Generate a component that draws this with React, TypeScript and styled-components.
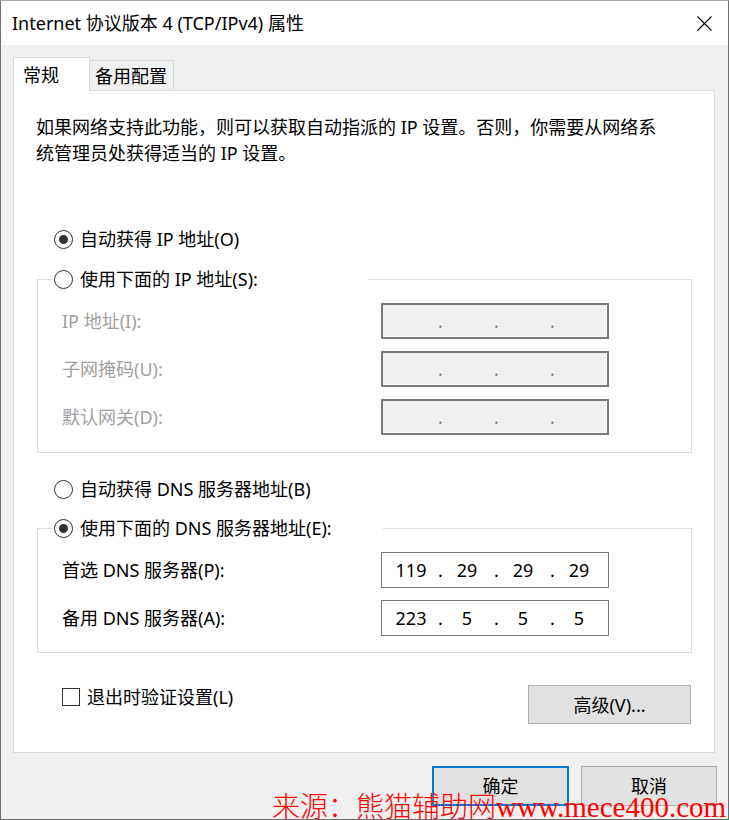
import styled, { createGlobalStyle } from "styled-components";

const GlobalStyle = createGlobalStyle`
  html, body {
    margin: 0;
    padding: 0;
    background: #f0f0f0;
  }
  body {
    font-family: "Noto Sans", "Noto Sans CJK SC", sans-serif;
    font-size: 18px;
    color: #000;
  }
  * {
    box-sizing: border-box;
  }
`;

const Window = styled.div`
  position: relative;
  width: 729px;
  height: 820px;
  border: 1px solid #6f6f6f;
  border-top-color: #a8a8a8;
  background: #f0f0f0;
  overflow: hidden;
  display: flex;
  flex-direction: column;
`;

const TitleBar = styled.div`
  height: 44px;
  flex: none;
  background: #fff;
  display: flex;
  align-items: center;
  justify-content: space-between;
  padding: 0 16px 0 11px;
`;

const Title = styled.span`
  font-size: 18px;
  line-height: 24px;
`;

const Body = styled.div`
  padding: 12px 12px 0 12px;
  display: flex;
  flex-direction: column;
`;

const Tabs = styled.div`
  display: flex;
  align-items: flex-end;
  height: 34px;
  margin-bottom: -1px;
`;

const Tab = styled.div<{ $active?: boolean }>`
  position: relative;
  z-index: ${(p) => (p.$active ? 1 : 0)};
  height: ${(p) => (p.$active ? "34px" : "31px")};
  width: ${(p) => (p.$active ? "77px" : "84px")};
  padding-left: ${(p) => (p.$active ? "9px" : "5px")};
  background: ${(p) => (p.$active ? "#fff" : "#f0f0f0")};
  border: 1px solid #d9d9d9;
  border-left-width: ${(p) => (p.$active ? "1px" : "0")};
  border-bottom-width: ${(p) => (p.$active ? "0" : "1px")};
  display: flex;
  align-items: center;
  line-height: 24px;
`;

const Panel = styled.div`
  width: 702px;
  background: #fff;
  border: 1px solid #d9d9d9;
  padding: 23px 0 28px 22px;
  display: flex;
  flex-direction: column;
`;

const Description = styled.p`
  margin: 0;
  line-height: 26px;
`;

const RadioRow = styled.label<{ $top?: number }>`
  display: flex;
  align-items: center;
  height: 26px;
  margin-top: ${(p) => p.$top ?? 0}px;
  margin-left: 18px;
  line-height: 26px;
`;

const RadioCircle = styled.span<{ $checked?: boolean }>`
  flex: none;
  width: 19px;
  height: 19px;
  border: 1px solid #333;
  border-radius: 50%;
  background: #fff;
  margin-right: 7px;
  display: flex;
  align-items: center;
  justify-content: center;
  &::after {
    content: "";
    display: ${(p) => (p.$checked ? "block" : "none")};
    width: 9px;
    height: 9px;
    border-radius: 50%;
    background: #333;
  }
`;

const Group = styled.fieldset<{ $top: number; $bottom: number }>`
  margin: ${(p) => p.$top}px 0 0 1px;
  width: 655px;
  min-width: 0;
  border: 1px solid #dcdcdc;
  padding: 11px 0 ${(p) => p.$bottom}px 0;
  display: flex;
  flex-direction: column;
  gap: 12px;
`;

const Legend = styled.legend<{ $width: number }>`
  margin-left: 15px;
  padding: 0 0 0 1px;
  width: ${(p) => p.$width}px;
  height: 26px;
  display: flex;
  align-items: center;
  line-height: 26px;
`;

const FieldRow = styled.div`
  display: flex;
  align-items: center;
  padding-left: 24px;
  height: 36px;
`;

const FieldLabel = styled.span<{ $disabled?: boolean }>`
  width: 319px;
  color: ${(p) => (p.$disabled ? "#a0a0a0" : "#000")};
  line-height: 26px;
`;

const IpBox = styled.div<{ $disabled?: boolean }>`
  width: 228px;
  height: 36px;
  border: 1px solid #7a7a7a;
  box-shadow: ${(p) => (p.$disabled ? "inset 0 0 0 1px #7a7a7a, inset -2px -2px 0 0 #fafafa" : "none")};
  background: ${(p) => (p.$disabled ? "#f0f0f0" : "#fff")};
  color: ${(p) => (p.$disabled ? "#8c8080" : "#000")};
  padding-left: 2px;
  display: grid;
  grid-template-columns: 54px 2px 54px 2px 54px 2px 54px;
  align-items: center;
  line-height: 33px;
`;

const Octet = styled.span`
  text-align: center;
`;

const Dot = styled.span`
  justify-self: start;
`;

const BottomRow = styled.div`
  margin-top: 32px;
  display: flex;
  justify-content: space-between;
  align-items: flex-start;
  padding: 0 23px 0 26px;
`;

const CheckRow = styled.label`
  display: flex;
  align-items: center;
  height: 26px;
  margin-top: -1px;
  line-height: 26px;
`;

const CheckBox = styled.span`
  width: 18px;
  height: 18px;
  border: 1px solid #333;
  background: #fff;
  margin-right: 7px;
`;

const Button = styled.button<{ $primary?: boolean; $w: number; $h: number }>`
  width: ${(p) => p.$w}px;
  height: ${(p) => p.$h}px;
  padding: 0;
  background: #e1e1e1;
  border: ${(p) => (p.$primary ? "2px solid #0078d7" : "1px solid #adadad")};
  font-family: "Noto Sans", "Noto Sans CJK SC", sans-serif;
  font-size: 18px;
  color: #000;
  line-height: 24px;
`;

const Footer = styled.div`
  margin: 13px -1px 0 0;
  display: flex;
  justify-content: flex-end;
  gap: 12px;
`;

const Watermark = styled.div`
  position: absolute;
  left: 271px;
  top: 790px;
  color: #ff0000;
  font-size: 28px;
  line-height: 28px;
  white-space: nowrap;
  pointer-events: none;
`;

const WatermarkCjk = styled.span`
  font-family: "Noto Sans CJK SC", sans-serif;
  font-weight: 300;
`;

const WatermarkUrl = styled.span`
  font-family: "Liberation Serif", serif;
  font-size: 29px;
`;

const CloseIcon = () => (
  <svg width="15" height="15" viewBox="0 0 15 15">
    <path d="M0.5 0.5 L14.5 14.5 M14.5 0.5 L0.5 14.5" stroke="#000" strokeWidth="1.1" fill="none" />
  </svg>
);

const Radio = ({ checked, children }: { checked?: boolean; children: React.ReactNode }) => (
  <>
    <RadioCircle $checked={checked} />
    <span>{children}</span>
  </>
);

const IpField = ({ values, disabled }: { values: string[]; disabled?: boolean }) => (
  <IpBox $disabled={disabled}>
    {values.flatMap((v, i) => [
      i > 0 ? <Dot key={`d${i}`}>.</Dot> : null,
      <Octet key={`o${i}`}>{v}</Octet>,
    ])}
  </IpBox>
);

const empty = ["", "", "", ""];

export default function App() {
  return (
    <>
      <GlobalStyle />
      <Window>
        <TitleBar>
          <Title>Internet 协议版本 4 (TCP/IPv4) 属性</Title>
          <CloseIcon />
        </TitleBar>
        <Body>
          <Tabs>
            <Tab $active>常规</Tab>
            <Tab>备用配置</Tab>
          </Tabs>
          <Panel>
            <Description>
              如果网络支持此功能，则可以获取自动指派的 IP 设置。否则，你需要从网络系
              <br />
              统管理员处获得适当的 IP 设置。
            </Description>

            <RadioRow $top={60}>
              <Radio checked>自动获得 IP 地址(O)</Radio>
            </RadioRow>
            <Group $top={14} $bottom={17}>
              <Legend $width={315}>
                <Radio>使用下面的 IP 地址(S):</Radio>
              </Legend>
              <FieldRow>
                <FieldLabel $disabled>IP 地址(I):</FieldLabel>
                <IpField values={empty} disabled />
              </FieldRow>
              <FieldRow>
                <FieldLabel $disabled>子网掩码(U):</FieldLabel>
                <IpField values={empty} disabled />
              </FieldRow>
              <FieldRow>
                <FieldLabel $disabled>默认网关(D):</FieldLabel>
                <IpField values={empty} disabled />
              </FieldRow>
            </Group>

            <RadioRow $top={23}>
              <Radio>自动获得 DNS 服务器地址(B)</Radio>
            </RadioRow>
            <Group $top={13} $bottom={16}>
              <Legend $width={330}>
                <Radio checked>使用下面的 DNS 服务器地址(E):</Radio>
              </Legend>
              <FieldRow>
                <FieldLabel>首选 DNS 服务器(P):</FieldLabel>
                <IpField values={["119", "29", "29", "29"]} />
              </FieldRow>
              <FieldRow>
                <FieldLabel>备用 DNS 服务器(A):</FieldLabel>
                <IpField values={["223", "5", "5", "5"]} />
              </FieldRow>
            </Group>

            <BottomRow>
              <CheckRow>
                <CheckBox />
                退出时验证设置(L)
              </CheckRow>
              <Button $w={163} $h={39}>高级(V)...</Button>
            </BottomRow>
          </Panel>
          <Footer>
            <Button $primary $w={137} $h={40}>确定</Button>
            <Button $w={136} $h={40}>取消</Button>
          </Footer>
        </Body>
        <Watermark>
          <WatermarkCjk>来源：熊猫辅助网</WatermarkCjk>
          <WatermarkUrl>www.mece400.com</WatermarkUrl>
        </Watermark>
      </Window>
    </>
  );
}
